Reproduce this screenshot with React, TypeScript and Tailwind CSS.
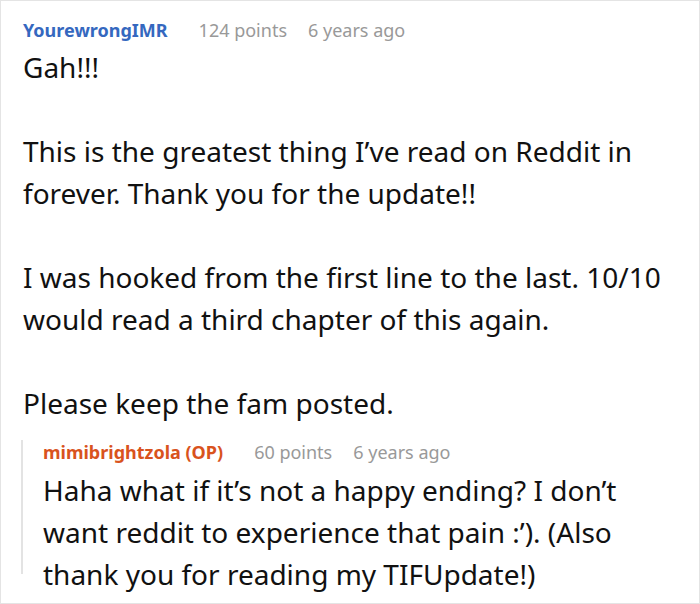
import React from 'react';

interface CommentMetaProps {
  author: string;
  authorClass: string;
  points: string;
  age: string;
}

function CommentMeta({ author, authorClass, points, age }: CommentMetaProps) {
  return (
    <div className="flex items-baseline text-[18px] leading-[24px] whitespace-nowrap">
      <span className={`font-bold mr-[31px] ${authorClass}`}>{author}</span>
      <span className="text-[#999999] mr-[21px]">{points}</span>
      <span className="text-[#999999]">{age}</span>
    </div>
  );
}

export default function App() {
  return (
    <div className="w-[700px] h-[604px] bg-white border border-[#e4e4e4] overflow-hidden font-['Noto_Sans',sans-serif] text-[#111111]">
      <div className="pl-[22px] pr-4 pt-[17px]">
        {/* Top-level comment */}
        <CommentMeta author="YourewrongIMR" authorClass="text-[#3568bf]" points="124 points" age="6 years ago" />
        <div className="text-[28px] leading-[42px] mt-[4px]">
          <p className="mb-[42px]">Gah!!!</p>
          <p className="mb-[42px]">This is the greatest thing I’ve read on Reddit in forever. Thank you for the update!!</p>
          <p className="mb-[42px]">I was hooked from the first line to the last. 10/10 would read a third chapter of this again.</p>
          <p>Please keep the fam posted.</p>
        </div>

        {/* Reply */}
        <div className="mt-[28px] h-[134px] -ml-[2px] border-l-2 border-[#e3e3e3] pl-[20px]">
          <div className="-mt-[12px]">
            <CommentMeta author="mimibrightzola (OP)" authorClass="text-[#d9531d]" points="60 points" age="6 years ago" />
          </div>
          <p className="text-[28px] leading-[42px] mt-[5px]">
            Haha what if it’s not a happy ending? I don’t want reddit to experience that pain :’). (Also thank you for reading my TIFUpdate!)
          </p>
        </div>
      </div>
    </div>
  );
}
